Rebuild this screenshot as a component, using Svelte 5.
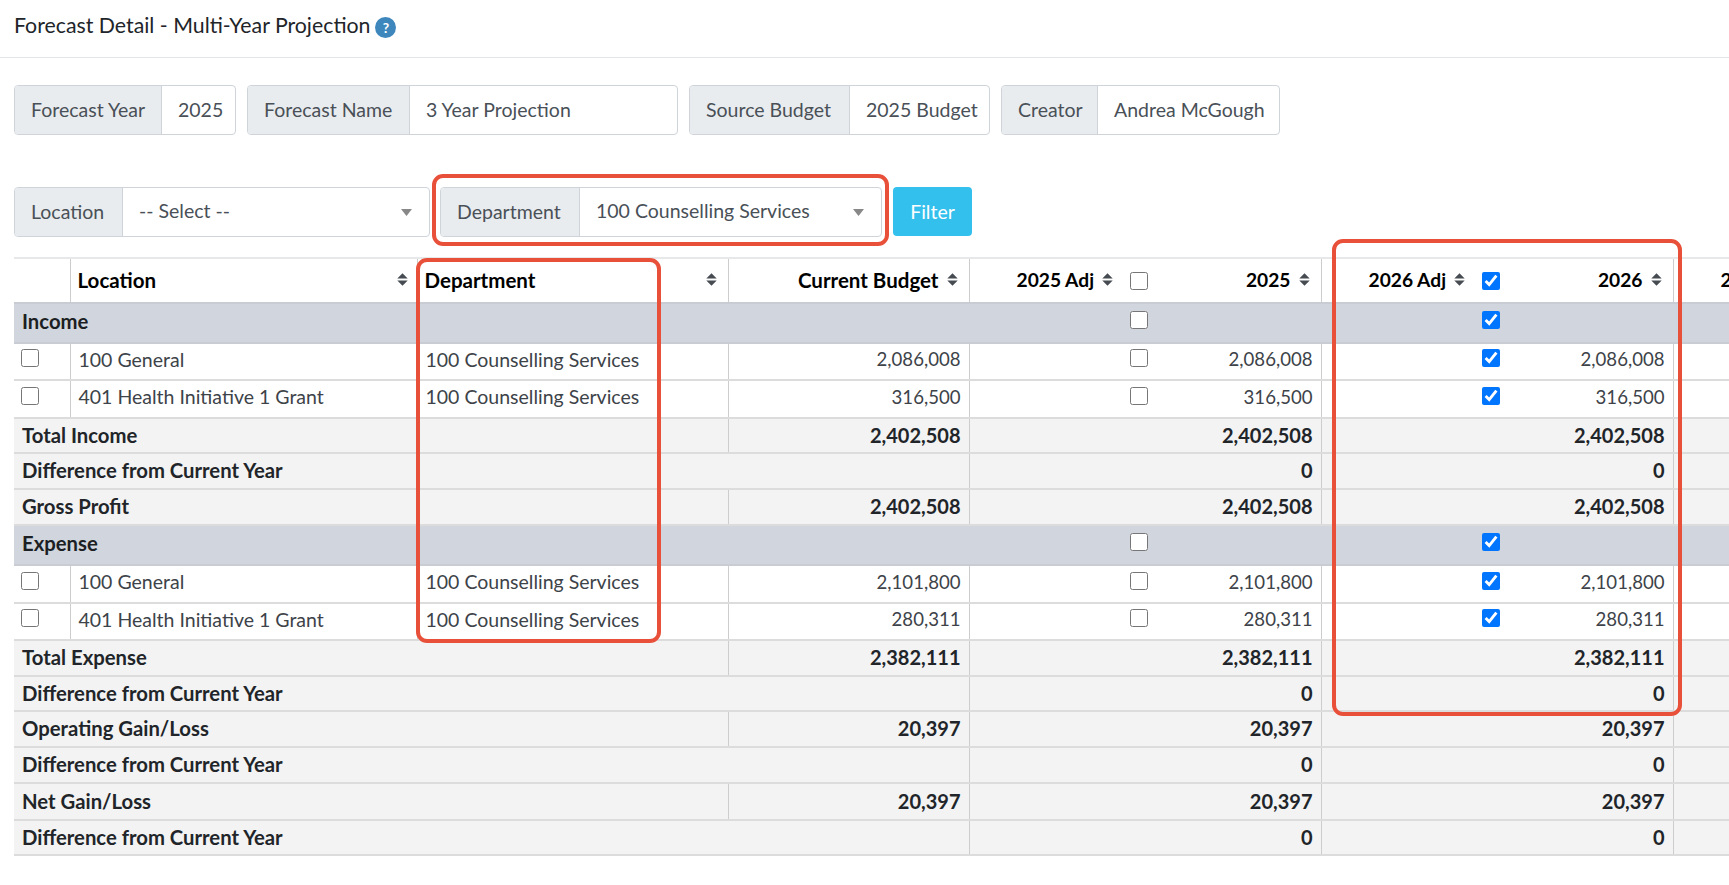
<script>
  const years = ['2025', '2026'];
  const checks = { 2025: false, 2026: true };
  const rows = [
    { t: 'section', label: 'Income', h: 40 },
    { t: 'item', loc: '100 General', v: ['2,086,008', '2,086,008', '2,086,008'], h: 37 },
    { t: 'item', loc: '401 Health Initiative 1 Grant', v: ['316,500', '316,500', '316,500'], h: 38 },
    { t: 'total', label: 'Total Income', v: ['2,402,508', '2,402,508', '2,402,508'], h: 35 },
    { t: 'diff', label: 'Difference from Current Year', v: ['0', '0'], h: 36 },
    { t: 'total', label: 'Gross Profit', v: ['2,402,508', '2,402,508', '2,402,508'], h: 36 },
    { t: 'section', label: 'Expense', h: 40 },
    { t: 'item', loc: '100 General', v: ['2,101,800', '2,101,800', '2,101,800'], h: 38 },
    { t: 'item', loc: '401 Health Initiative 1 Grant', v: ['280,311', '280,311', '280,311'], h: 37 },
    { t: 'total', label: 'Total Expense', v: ['2,382,111', '2,382,111', '2,382,111'], h: 36 },
    { t: 'diff', label: 'Difference from Current Year', v: ['0', '0'], h: 35 },
    { t: 'total', label: 'Operating Gain/Loss', v: ['20,397', '20,397', '20,397'], h: 36 },
    { t: 'diff', label: 'Difference from Current Year', v: ['0', '0'], h: 36 },
    { t: 'total', label: 'Net Gain/Loss', v: ['20,397', '20,397', '20,397'], h: 37 },
    { t: 'diff', label: 'Difference from Current Year', v: ['0', '0'], h: 35 }
  ];
</script>

{#snippet sort()}
  <svg class="sort" width="11" height="13" viewBox="0 0 11 13" aria-hidden="true">
    <path d="M0.3 5.6 L5.5 0.3 L10.7 5.6Z M0.3 7.4 L5.5 12.7 L10.7 7.4Z" />
  </svg>
{/snippet}

{#snippet caret()}
  <svg class="caret" width="11" height="7" viewBox="0 0 11 7" aria-hidden="true"><path d="M0 0H11L5.5 7Z" /></svg>
{/snippet}

<div class="page">
  <header class="head">
    <h1>Forecast Detail - Multi-Year Projection</h1>
    <span class="help">?</span>
  </header>

  <div class="meta">
    <div class="group g1"><span class="addon">Forecast Year</span><span class="val">2025</span></div>
    <div class="group g2"><span class="addon">Forecast Name</span><span class="val">3 Year Projection</span></div>
    <div class="group g3"><span class="addon">Source Budget</span><span class="val">2025 Budget</span></div>
    <div class="group g4"><span class="addon">Creator</span><span class="val">Andrea McGough</span></div>
  </div>

  <div class="filters">
    <div class="group g5"><span class="addon">Location</span><span class="val sel"><span class="seltext">-- Select --</span>{@render caret()}</span></div>
    <div class="group g6"><span class="addon">Department</span><span class="val sel"><span class="seltext">100 Counselling Services</span>{@render caret()}</span></div>
    <button class="filter">Filter</button>
  </div>

  <div class="tablewrap">
    <table>
      <colgroup>
        <col class="c-chk" /><col class="c-loc" /><col class="c-dep" /><col class="c-bud" />
        <col class="c-adj" /><col class="c-box" /><col class="c-val" />
        <col class="c-adj" /><col class="c-box" /><col class="c-val" />
        <col class="c-adj" />
      </colgroup>
      <thead>
        <tr>
          <th class="br"></th>
          <th class="br"><div class="th loc"><span>Location</span>{@render sort()}</div></th>
          <th class="br"><div class="th"><span>Department</span>{@render sort()}</div></th>
          <th class="br"><div class="th end"><span>Current Budget</span>{@render sort()}</div></th>
          {#each years as y}
            <th><div class="th end"><span class="yr">{y} Adj</span>{@render sort()}</div></th>
            <th class="boxcell"><input type="checkbox" checked={checks[y]} /></th>
            <th class="br"><div class="th end"><span class="yr">{y}</span>{@render sort()}</div></th>
          {/each}
          <th><div class="th end"><span class="yr">2027 Adj</span>{@render sort()}</div></th>
        </tr>
      </thead>
      <tbody>
        {#each rows as r}
          <tr class={r.t} style="height:{r.h}px">
            {#if r.t === 'section'}
              <td colspan="5" class="lab">{r.label}</td>
              <td class="boxcell"><input type="checkbox" /></td>
              <td colspan="2"></td>
              <td class="boxcell"><input type="checkbox" checked /></td>
              <td colspan="2"></td>
            {:else if r.t === 'item'}
              <td class="br chkcell"><input type="checkbox" /></td>
              <td class="br">{r.loc}</td>
              <td class="br">100 Counselling Services</td>
              <td class="br num">{r.v[0]}</td>
              <td></td>
              <td class="boxcell"><input type="checkbox" /></td>
              <td class="br num">{r.v[1]}</td>
              <td></td>
              <td class="boxcell"><input type="checkbox" checked /></td>
              <td class="br num">{r.v[2]}</td>
              <td></td>
            {:else if r.t === 'total'}
              <td colspan="3" class="br lab">{r.label}</td>
              <td class="br num">{r.v[0]}</td>
              <td colspan="3" class="br num">{r.v[1]}</td>
              <td colspan="3" class="br num">{r.v[2]}</td>
              <td></td>
            {:else}
              <td colspan="4" class="br lab">{r.label}</td>
              <td colspan="3" class="br num">{r.v[0]}</td>
              <td colspan="3" class="br num">{r.v[1]}</td>
              <td></td>
            {/if}
          </tr>
        {/each}
      </tbody>
    </table>
  </div>

  <div class="mark m1"></div>
  <div class="mark m2"></div>
  <div class="mark m3"></div>
</div>

<style>
  :global(body) { margin: 0; background: #fff; overflow: hidden; }
  .page {
    position: relative;
    width: 1729px;
    height: 885px;
    overflow: hidden;
    font-family: "Lato", "Liberation Sans", sans-serif;
    font-size: 19.5px;
    color: #212529;
  }
  .head {
    height: 58px;
    border-bottom: 1px solid #e3e5e8;
    display: flex;
    align-items: center;
    padding: 0 0 8px 14px;
    box-sizing: border-box;
    gap: 5px;
  }
  h1 { margin: 0; font-size: 21.3px; font-weight: 400; color: #212529; white-space: nowrap; }
  .help {
    width: 21px; height: 21px; border-radius: 50%;
    background: #3d87bd; color: #fff;
    font-size: 14px; font-weight: 700;
    display: flex; align-items: center; justify-content: center;
    margin-top: 6px;
  }
  .meta { display: flex; gap: 11px; padding: 27px 0 0 14px; }
  .filters { display: flex; gap: 10px; padding: 52px 0 0 14px; }
  .group {
    display: flex;
    height: 50px;
    box-sizing: border-box;
    border: 1px solid #ced4da;
    border-radius: 4px;
    overflow: hidden;
    color: #495057;
    flex: none;
  }
  .g1 { width: 222px; } .g1 .addon { width: 147px; }
  .g2 { width: 431px; } .g2 .addon { width: 162px; }
  .g3 { width: 301px; } .g3 .addon { width: 160px; }
  .g4 { width: 279px; } .g4 .addon { width: 96px; }
  .g5 { width: 416px; } .g5 .addon { width: 108px; }
  .g6 { width: 442px; } .g6 .addon { width: 139px; }
  .addon {
    flex: none;
    box-sizing: border-box;
    background: #e9ecef;
    border-right: 1px solid #ced4da;
    display: flex; align-items: center;
    padding: 0 0 2px 16px;
    white-space: nowrap;
  }
  .val { flex: 1; display: flex; align-items: center; padding: 0 16px 2px; white-space: nowrap; min-width: 0; }
  .sel { justify-content: space-between; padding: 0 17px 0 16px; }
  .seltext { margin-top: -3px; }
  .caret { fill: #888; flex: none; }
  .filter {
    width: 79px; height: 49px;
    margin-left: 1px;
    border: 0; border-radius: 4px;
    background: #33c0ed; color: #fff;
    font: inherit; padding: 0;
  }
  .tablewrap { padding: 20px 0 0 14px; width: 1715px; overflow: hidden; }
  table {
    border-collapse: collapse;
    table-layout: fixed;
    width: 1814px;
  }
  .c-chk { width: 56px; } .c-loc { width: 347px; } .c-dep { width: 311px; } .c-bud { width: 241px; }
  .c-adj { width: 155px; } .c-box { width: 30px; } .c-val { width: 167px; }
  th, td {
    padding: 0 8px;
    white-space: nowrap;
    border-top: 2px solid #dcdcdc;
    border-bottom: 2px solid #dcdcdc;
    overflow: hidden;
  }
  thead tr { height: 45px; }
  thead th { border-top-color: #e6e8ea; border-bottom: 0; background: #fff; font-weight: 700; font-size: 20.5px; color: #000; text-align: left; padding-left: 7px; }
  .th { display: flex; align-items: center; justify-content: space-between; gap: 8px; padding: 0 3px 2px 0; }
  .th.loc { padding-right: 1px; }
  .th.end { justify-content: flex-end; }
  .yr { font-size: 19.2px; }
  .sort { flex: none; fill: #474c52; }
  .br { border-right: 1px solid #cdcdcd; }
  .num { text-align: right; }
  .section td { background: #d1d5de; border-color: #c9ccd2; font-weight: 700; font-size: 20.3px; color: #1c1f23; padding-bottom: 5px; }
  .total td, .diff td { background: #f3f3f3; font-weight: 700; font-size: 20.3px; padding-bottom: 2px; }
  .total td.num, .diff td.num { font-size: 20px; }
  .item td { color: #3d4349; padding-bottom: 5px; }
  .item td.num { font-size: 18.6px; }
  thead th.boxcell, .boxcell { padding: 0 6px; text-align: left; line-height: 0; }
  .item td.chkcell { padding: 0 7px 3px; line-height: 0; }
  .item td.boxcell, .section td.boxcell { padding-bottom: 3px; }
  input[type="checkbox"] { width: 18px; height: 18px; margin: 0 0 4px 0; display: inline-block; vertical-align: middle; }
  thead input[type="checkbox"] { margin: 0; }
  .mark {
    position: absolute;
    box-sizing: border-box;
    border: 4px solid #e8503a;
    border-radius: 11px;
    pointer-events: none;
  }
  .m1 { left: 432px; top: 174px; width: 457px; height: 72px; }
  .m2 { left: 416px; top: 258px; width: 245px; height: 385px; }
  .m3 { left: 1332px; top: 239px; width: 350px; height: 477px; }
</style>
